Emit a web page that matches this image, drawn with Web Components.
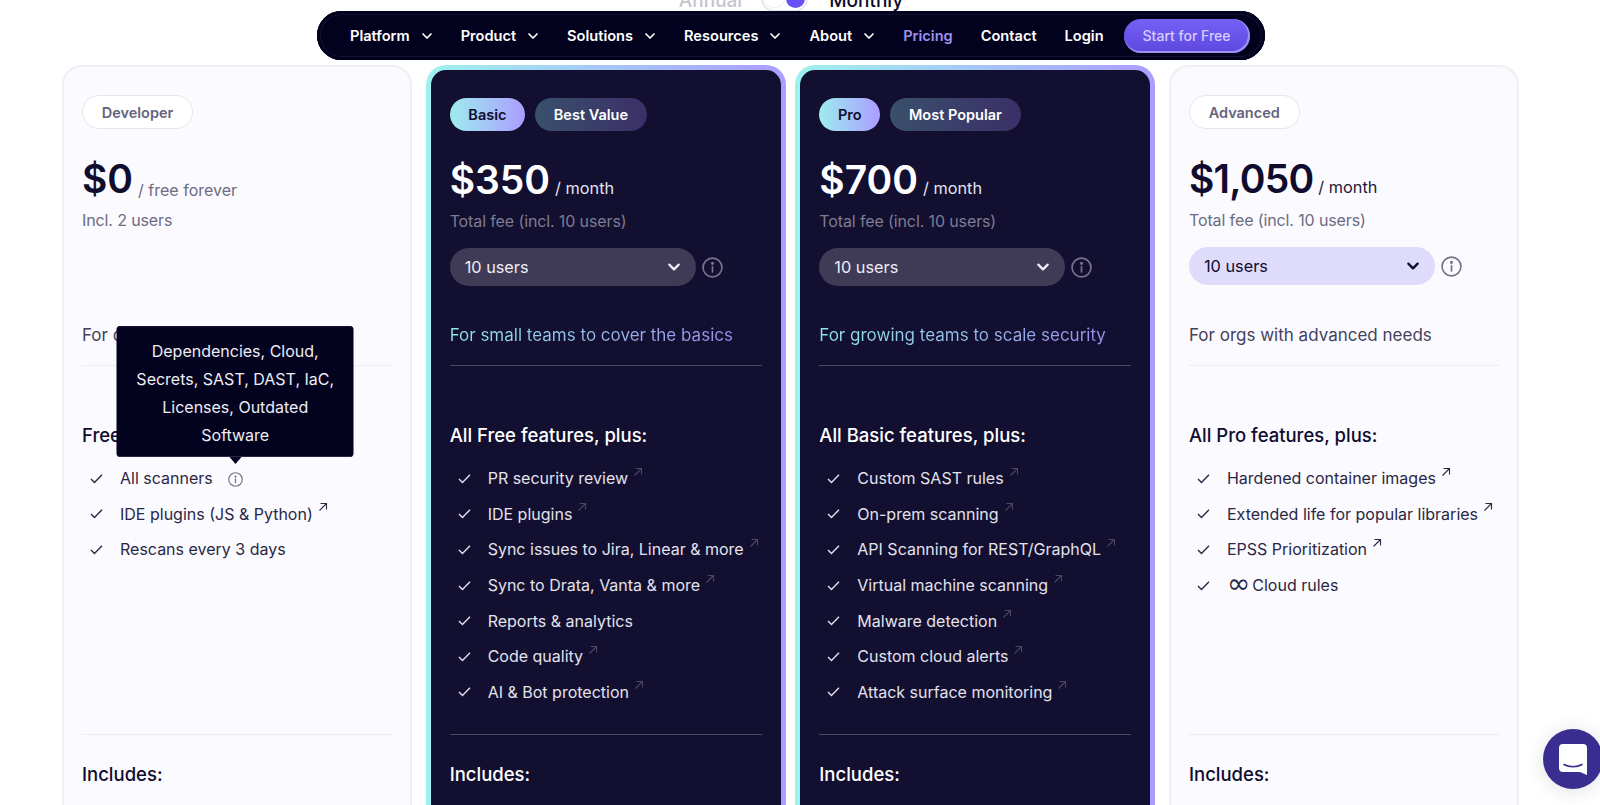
<!DOCTYPE html>
<html lang="en">
<head>
<meta charset="utf-8">
<title>Pricing</title>
<style>
html, body { margin: 0; height: 805px; overflow: hidden; background: #fff; font-family: Inter, "Liberation Sans", sans-serif; }
.page { width: 1582px; }
.plans { display: grid; grid-template-columns: 354px 360px 360px 354px; column-gap: 9.67px; padding-left: 62px; margin-top: 5px; }
.inf { font-family: "DejaVu Sans", sans-serif; font-size: 28px; line-height: 0; vertical-align: -2px; margin-right: 2px; }
</style>
</head>
<body>
<div class="page">
  <billing-toggle></billing-toggle>
  <top-nav></top-nav>
  <div class="plans">
    <plan-card tier="Developer" price="$0" per="/ free forever" fee="Incl. 2 users" tagline="For code security" heading="Free features:">
      <plan-feature>All scanners<info-tip slot="after">Dependencies, Cloud, Secrets, SAST, DAST, IaC, Licenses, Outdated Software</info-tip></plan-feature>
      <plan-feature link>IDE plugins (JS &amp; Python)</plan-feature>
      <plan-feature>Rescans every 3 days</plan-feature>
    </plan-card>
    <plan-card dark tier="Basic" tag="Best Value" price="$350" per="/ month" fee="Total fee (incl. 10 users)" users="10 users" tagline="For small teams to cover the basics" heading="All Free features, plus:">
      <plan-feature dark link>PR security review</plan-feature>
      <plan-feature dark link>IDE plugins</plan-feature>
      <plan-feature dark link>Sync issues to Jira, Linear &amp; more</plan-feature>
      <plan-feature dark link>Sync to Drata, Vanta &amp; more</plan-feature>
      <plan-feature dark>Reports &amp; analytics</plan-feature>
      <plan-feature dark link>Code quality</plan-feature>
      <plan-feature dark link>AI &amp; Bot protection</plan-feature>
    </plan-card>
    <plan-card dark tier="Pro" tag="Most Popular" price="$700" per="/ month" fee="Total fee (incl. 10 users)" users="10 users" tagline="For growing teams to scale security" heading="All Basic features, plus:">
      <plan-feature dark link>Custom SAST rules</plan-feature>
      <plan-feature dark link>On-prem scanning</plan-feature>
      <plan-feature dark link>API Scanning for REST/GraphQL</plan-feature>
      <plan-feature dark link>Virtual machine scanning</plan-feature>
      <plan-feature dark link>Malware detection</plan-feature>
      <plan-feature dark link>Custom cloud alerts</plan-feature>
      <plan-feature dark link>Attack surface monitoring</plan-feature>
    </plan-card>
    <plan-card last tier="Advanced" price="$1,050" per="/ month" fee="Total fee (incl. 10 users)" users="10 users" tagline="For orgs with advanced needs" heading="All Pro features, plus:">
      <plan-feature link>Hardened container images</plan-feature>
      <plan-feature link>Extended life for popular libraries</plan-feature>
      <plan-feature link>EPSS Prioritization</plan-feature>
      <plan-feature><span><span class="inf">∞</span>Cloud rules</span></plan-feature>
    </plan-card>
  </div>
</div>
<chat-launcher></chat-launcher>

<script>
(function() {
const chevron = (size, width) => `<svg width="${size}" height="${size}" viewBox="0 0 12 12" fill="none" stroke="currentColor" stroke-width="${width}" stroke-linecap="round" stroke-linejoin="round"><path d="M2 4l4 4 4-4"/></svg>`;
const infoIcon = (size, width) => `<svg width="${size}" height="${size}" viewBox="0 0 20 20" fill="none" stroke="currentColor" stroke-width="${width}"><circle cx="10" cy="10" r="9"/><path d="M10 9.2v5" stroke-linecap="round"/><circle cx="10" cy="6" r=".7" fill="currentColor"/></svg>`;

class BillingToggle extends HTMLElement {
  constructor() {
    super();
    this.attachShadow({mode: 'open'}).innerHTML = `
    <style>
    :host { display: flex; justify-content: center; align-items: flex-end; height: 32px; margin-top: -20px; font-size: 19px; font-weight: 500; line-height: 24px; }
    .off { color: #c4c4cf; margin-bottom: -1px; }
    .on { color: #0c0a2a; margin-bottom: -1px; }
    .switch { box-sizing: border-box; width: 47px; height: 27px; margin: 0 21px 0 19px; border: 2px solid #e6e6ec; border-radius: 14px; background: #fff; display: flex; justify-content: space-between; align-items: center; padding: 0 1px; }
    .rest { width: 21px; height: 19px; border: 1px solid #efeff3; border-radius: 10px; box-sizing: border-box; }
    .knob { width: 19px; height: 19px; border-radius: 50%; background: #6852f6; }
    </style>
    <span class="off">Annual</span><span class="switch"><span class="rest"></span><span class="knob"></span></span><span class="on">Monthly</span>`;
  }
}

class TopNav extends HTMLElement {
  constructor() {
    super();
    const drop = t => `<a>${t}<i>${chevron(12, 1.7)}</i></a>`;
    this.attachShadow({mode: 'open'}).innerHTML = `
    <style>
    :host { display: flex; justify-content: center; margin-top: -1px; position: relative; z-index: 5; }
    nav { box-sizing: border-box; width: 948px; margin-right: 1px; height: 49px; padding: 0 14px 0 33.5px; display: flex; align-items: center; gap: 28px; border-radius: 25px; background: #02021e; box-shadow: inset 0 0 0 3px #02021e, inset 0 0 0 4px #14132f; color: #fff; font-size: 14.6px; font-weight: 600; white-space: nowrap; }
    a { display: flex; align-items: center; }
    i { display: flex; margin-left: 11px; }
    .active { color: #9d91ee; }
    .cta { margin-left: -8px; width: 126px; height: 34px; justify-content: center; border-radius: 17px; color: #d4cfff; font-size: 14px; font-weight: 500; background: linear-gradient(180deg, #7660f6, #5d47de); box-shadow: inset -1px -1px 0 1px #9c90f0; }
    </style>
    <nav>${drop('Platform')}${drop('Product')}${drop('Solutions')}${drop('Resources')}${drop('About')}<a class="active">Pricing</a><a>Contact</a><a>Login</a><a class="cta">Start for Free</a></nav>`;
  }
}

class PlanCard extends HTMLElement {
  constructor() {
    super();
    const dark = this.hasAttribute('dark');
    const a = n => this.getAttribute(n);
    const tag = a('tag') ? `<span class="tag extra">${a('tag')}</span>` : '';
    const select = a('users') ? `<div class="pick"><div class="select">${a('users')}${chevron(14, 2)}</div><span class="info">${infoIcon(21, 1.6)}</span></div>` : '';
    this.attachShadow({mode: 'open'}).innerHTML = `
    <style>
    :host { display: block; box-sizing: border-box; min-height: 790px; padding: 28px 18px 40px; position: relative; }
    :host(:not([dark])) { width: 350px; border: 2px solid #efeff5; border-radius: 20px; background: #fafaff; color: #0f0c2e; --muted: #6e6b82; --line: #ececf3; --body: #2a2745; }
    :host([last]) { justify-self: end; }
    :host([dark]) { padding: 28px 19px 40px; border: 5px solid transparent; border-radius: 20px; color: #fff; --muted: #7f7c92; --line: #4b4866; background: linear-gradient(#120f30, #120f30) padding-box, linear-gradient(90deg, #9ef2ee, #ab9dff) border-box; }
    .head { display: flex; flex-direction: column; height: ${dark ? 249 : 252}px; }
    .tags { display: flex; gap: 10px; height: ${dark ? 33 : 34}px; }
    .tag { box-sizing: border-box; display: flex; align-items: center; justify-content: center; padding: 0 18.7px; border-radius: 17px; font-size: 14.5px; font-weight: 600; }
    .tier { border: 1px solid #e6e6ee; background: #fff; color: #66637c; }
    :host([dark]) .tier { border: 0; background: linear-gradient(90deg, #9eecef, #ab9dff); color: #0f0c2e; }
    .extra { background: linear-gradient(90deg, #39506b, #3b2f68); color: #fff; }
    .price { display: flex; align-items: baseline; gap: 5px; margin-top: ${dark ? 26 : 27}px; height: 46px; line-height: 46px; font-size: 39px; font-weight: 600; white-space: nowrap; }
    :host([last]) .price { letter-spacing: -.8px; }
    .price span { font-size: 16.3px; font-weight: 400; letter-spacing: 0; color: var(--muted); }
    :host(:not([users])) .price span { font-size: 16px; transform: translateY(3px); }
    :host(:not([dark])[users]) .price span { color: #1b1838; }
    :host([dark]) .price span { color: #e4e3ee; }
    .fee { margin-top: 6px; font-size: 16px; line-height: 24px; letter-spacing: -.12px; color: var(--muted); }
    .pick { display: flex; align-items: center; gap: 6px; margin-top: 15px; }
    .select { box-sizing: border-box; width: 246px; height: 38px; padding: 0 15px; display: flex; align-items: center; justify-content: space-between; border-radius: 19px; font-size: 16.3px; background: #dfdbfb; color: #0f0c2e; }
    :host([dark]) .select { background: #3f3a55; color: #eeedf5; }
    .info { display: flex; color: #77748a; }
    .tagline { margin-top: auto; font-size: 17px; line-height: 24px; color: #45425c; }
    :host([dark]) .tagline { align-self: flex-start; background: linear-gradient(90deg, #8ee6e6, #9a8fe8); -webkit-background-clip: text; background-clip: text; color: transparent; }
    hr { margin: 18px 0 0; border: 0; height: 1px; background: var(--line); }
    h3 { margin: 57px 0 0; font-size: 18.5px; line-height: 24px; font-weight: 500; }
    .list { height: 273px; margin-top: 13.5px; }
    .inc { margin-top: 27px; }
    </style>
    <div class="head">
      <div class="tags"><span class="tag tier">${a('tier')}</span>${tag}</div>
      <div class="price">${a('price')}<span>${a('per')}</span></div>
      <div class="fee">${a('fee')}</div>
      ${select}
      <div class="tagline">${a('tagline')}</div>
    </div>
    <hr>
    <h3>${a('heading')}</h3>
    <div class="list"><slot></slot></div>
    <hr style="margin-top:0">
    <h3 class="inc">Includes:</h3>`;
  }
}

class PlanFeature extends HTMLElement {
  constructor() {
    super();
    const ext = this.hasAttribute('link') ? `<svg class="ext" width="10" height="10" viewBox="0 0 10 10" fill="none" stroke="currentColor" stroke-width="1.1"><path d="M1.5 8.5L8.5 1.5M2.5 1.5h6v6"/></svg>` : '';
    this.attachShadow({mode: 'open'}).innerHTML = `
    <style>
    :host { display: flex; align-items: center; height: 35.6px; padding-left: 8px; font-size: 16px; line-height: 24px; white-space: nowrap; color: #2a2745; position: relative; --ext: #2a2745; }
    :host([dark]) { color: #e3e2ec; --ext: #4c4862; }
    .check { width: 30px; display: flex; flex: none; }
    .ext { color: var(--ext); margin: -13px 0 0 5px; }
    </style>
    <span class="check"><svg width="13" height="11" viewBox="0 0 14 12" fill="none" stroke="currentColor" stroke-width="1.5"><path d="M1 6.5l3.8 3.8L13 2"/></svg></span>
    <slot></slot>${ext}<slot name="after"></slot>`;
  }
}

class InfoTip extends HTMLElement {
  constructor() {
    super();
    this.attachShadow({mode: 'open'}).innerHTML = `
    <style>
    :host { display: inline-flex; position: relative; margin-left: 15px; margin-top: 2px; color: #77748a; }
    .bubble { position: absolute; z-index: 10; left: 50%; bottom: 30px; transform: translateX(-50%); box-sizing: border-box; width: 237px; padding: 11px 16px 8px; border-radius: 4px; background: #03021f; box-shadow: inset 0 -1px 0 #2a2847, inset 0 1px 0 #15142f; color: #eeedf3; font-size: 16px; line-height: 28px; text-align: center; white-space: normal; }
    .bubble::after { content: ""; position: absolute; left: 50%; bottom: -7px; margin-left: -6px; border: 6px solid transparent; border-bottom: 0; border-top: 7px solid #03021f; }
    </style>
    ${infoIcon(15, 1.6)}
    <div class="bubble"><slot></slot></div>`;
  }
}

class ChatLauncher extends HTMLElement {
  constructor() {
    super();
    this.attachShadow({mode: 'open'}).innerHTML = `
    <style>
    :host { position: fixed; left: 1543px; top: 729px; width: 60px; height: 60px; border-radius: 50%; background: #3a2d90; display: flex; align-items: center; justify-content: center; box-shadow: 0 2px 20px rgba(0,0,0,.12); }
    </style>
    <svg width="28" height="31" viewBox="0 0 28 31"><path d="M4 0h20a4 4 0 0 1 4 4v27l-7-3H4a4 4 0 0 1-4-4V4a4 4 0 0 1 4-4z" fill="#fff"/><path d="M5 20.5c5 3 13 3 18 0" fill="none" stroke="#3a2d90" stroke-width="1.6" stroke-linecap="round"/></svg>`;
  }
}

customElements.define('billing-toggle', BillingToggle);
customElements.define('top-nav', TopNav);
customElements.define('plan-card', PlanCard);
customElements.define('plan-feature', PlanFeature);
customElements.define('info-tip', InfoTip);
customElements.define('chat-launcher', ChatLauncher);
})();
</script>
</body>
</html>
